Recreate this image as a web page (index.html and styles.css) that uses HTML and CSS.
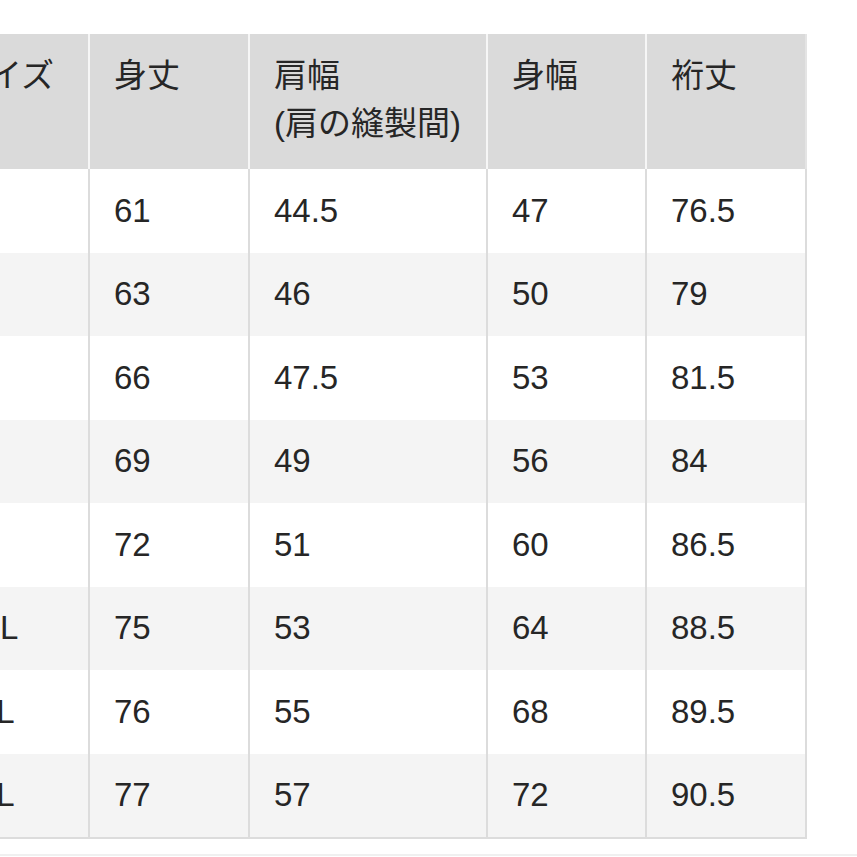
FILE: index.html
```html
<!DOCTYPE html>
<html lang="ja">
<head>
<meta charset="utf-8">
<link rel="stylesheet" href="styles.css">
</head>
<body>
<div class="page">
  <table class="size-table">
    <colgroup>
      <col class="c-size">
      <col class="c-std">
      <col class="c-wide">
      <col class="c-std2">
      <col class="c-last">
    </colgroup>
    <thead>
      <tr>
        <th>サイズ</th>
        <th>身丈</th>
        <th>肩幅<br>(肩の縫製間)</th>
        <th>身幅</th>
        <th>裄丈</th>
      </tr>
    </thead>
    <tbody>
      <tr><td>XS</td><td>61</td><td>44.5</td><td>47</td><td>76.5</td></tr>
      <tr><td>S</td><td>63</td><td>46</td><td>50</td><td>79</td></tr>
      <tr><td>M</td><td>66</td><td>47.5</td><td>53</td><td>81.5</td></tr>
      <tr><td>L</td><td>69</td><td>49</td><td>56</td><td>84</td></tr>
      <tr><td>XL</td><td>72</td><td>51</td><td>60</td><td>86.5</td></tr>
      <tr><td>XXL</td><td>75</td><td>53</td><td>64</td><td>88.5</td></tr>
      <tr><td>3XL</td><td>76</td><td>55</td><td>68</td><td>89.5</td></tr>
      <tr><td>4XL</td><td>77</td><td>57</td><td>72</td><td>90.5</td></tr>
    </tbody>
  </table>
  <div class="rule"></div>
</div>
</body>
</html>
```

FILE: styles.css
```css
html, body {
  margin: 0;
  padding: 0;
  background: #ffffff;
  overflow: hidden;
}

.page {
  padding-top: 34px;
  width: 857px;
  height: 857px;
  box-sizing: border-box;
  overflow: hidden;
  font-family: "Liberation Sans", "Noto Sans CJK JP", sans-serif;
  color: #262626;
}

.size-table {
  margin-left: -68px;
  width: 875px;
  table-layout: fixed;
  border-collapse: separate;
  border-spacing: 0;
  font-size: 33px;
  border-bottom: 2px solid #dcdcdc;
}

.c-size { width: 158px; }
.c-std { width: 160px; }
.c-wide { width: 238px; }
.c-std2 { width: 159px; }
.c-last { width: 160px; }

.size-table th,
.size-table td {
  box-sizing: border-box;
  text-align: left;
  font-weight: normal;
  line-height: 48px;
  padding-left: 24px;
  padding-right: 8px;
  white-space: nowrap;
}

.size-table th {
  background: #dadada;
  vertical-align: top;
  padding-top: 18px;
  padding-bottom: 21px;
  height: 135px;
  border-right: 2px solid #f6f6f6;
}

.size-table th:last-child {
  border-right: 2px solid #e4e4e4;
}

.size-table td {
  height: 83.5px;
  padding-top: 0;
  padding-bottom: 0;
  vertical-align: middle;
  border-right: 2px solid #dcdcdc;
  background: #ffffff;
}

.size-table tbody tr:nth-child(even) td {
  background: #f4f4f4;
}

.rule {
  margin-top: 15px;
  border-top: 2px solid #f0f0f0;
}
```
